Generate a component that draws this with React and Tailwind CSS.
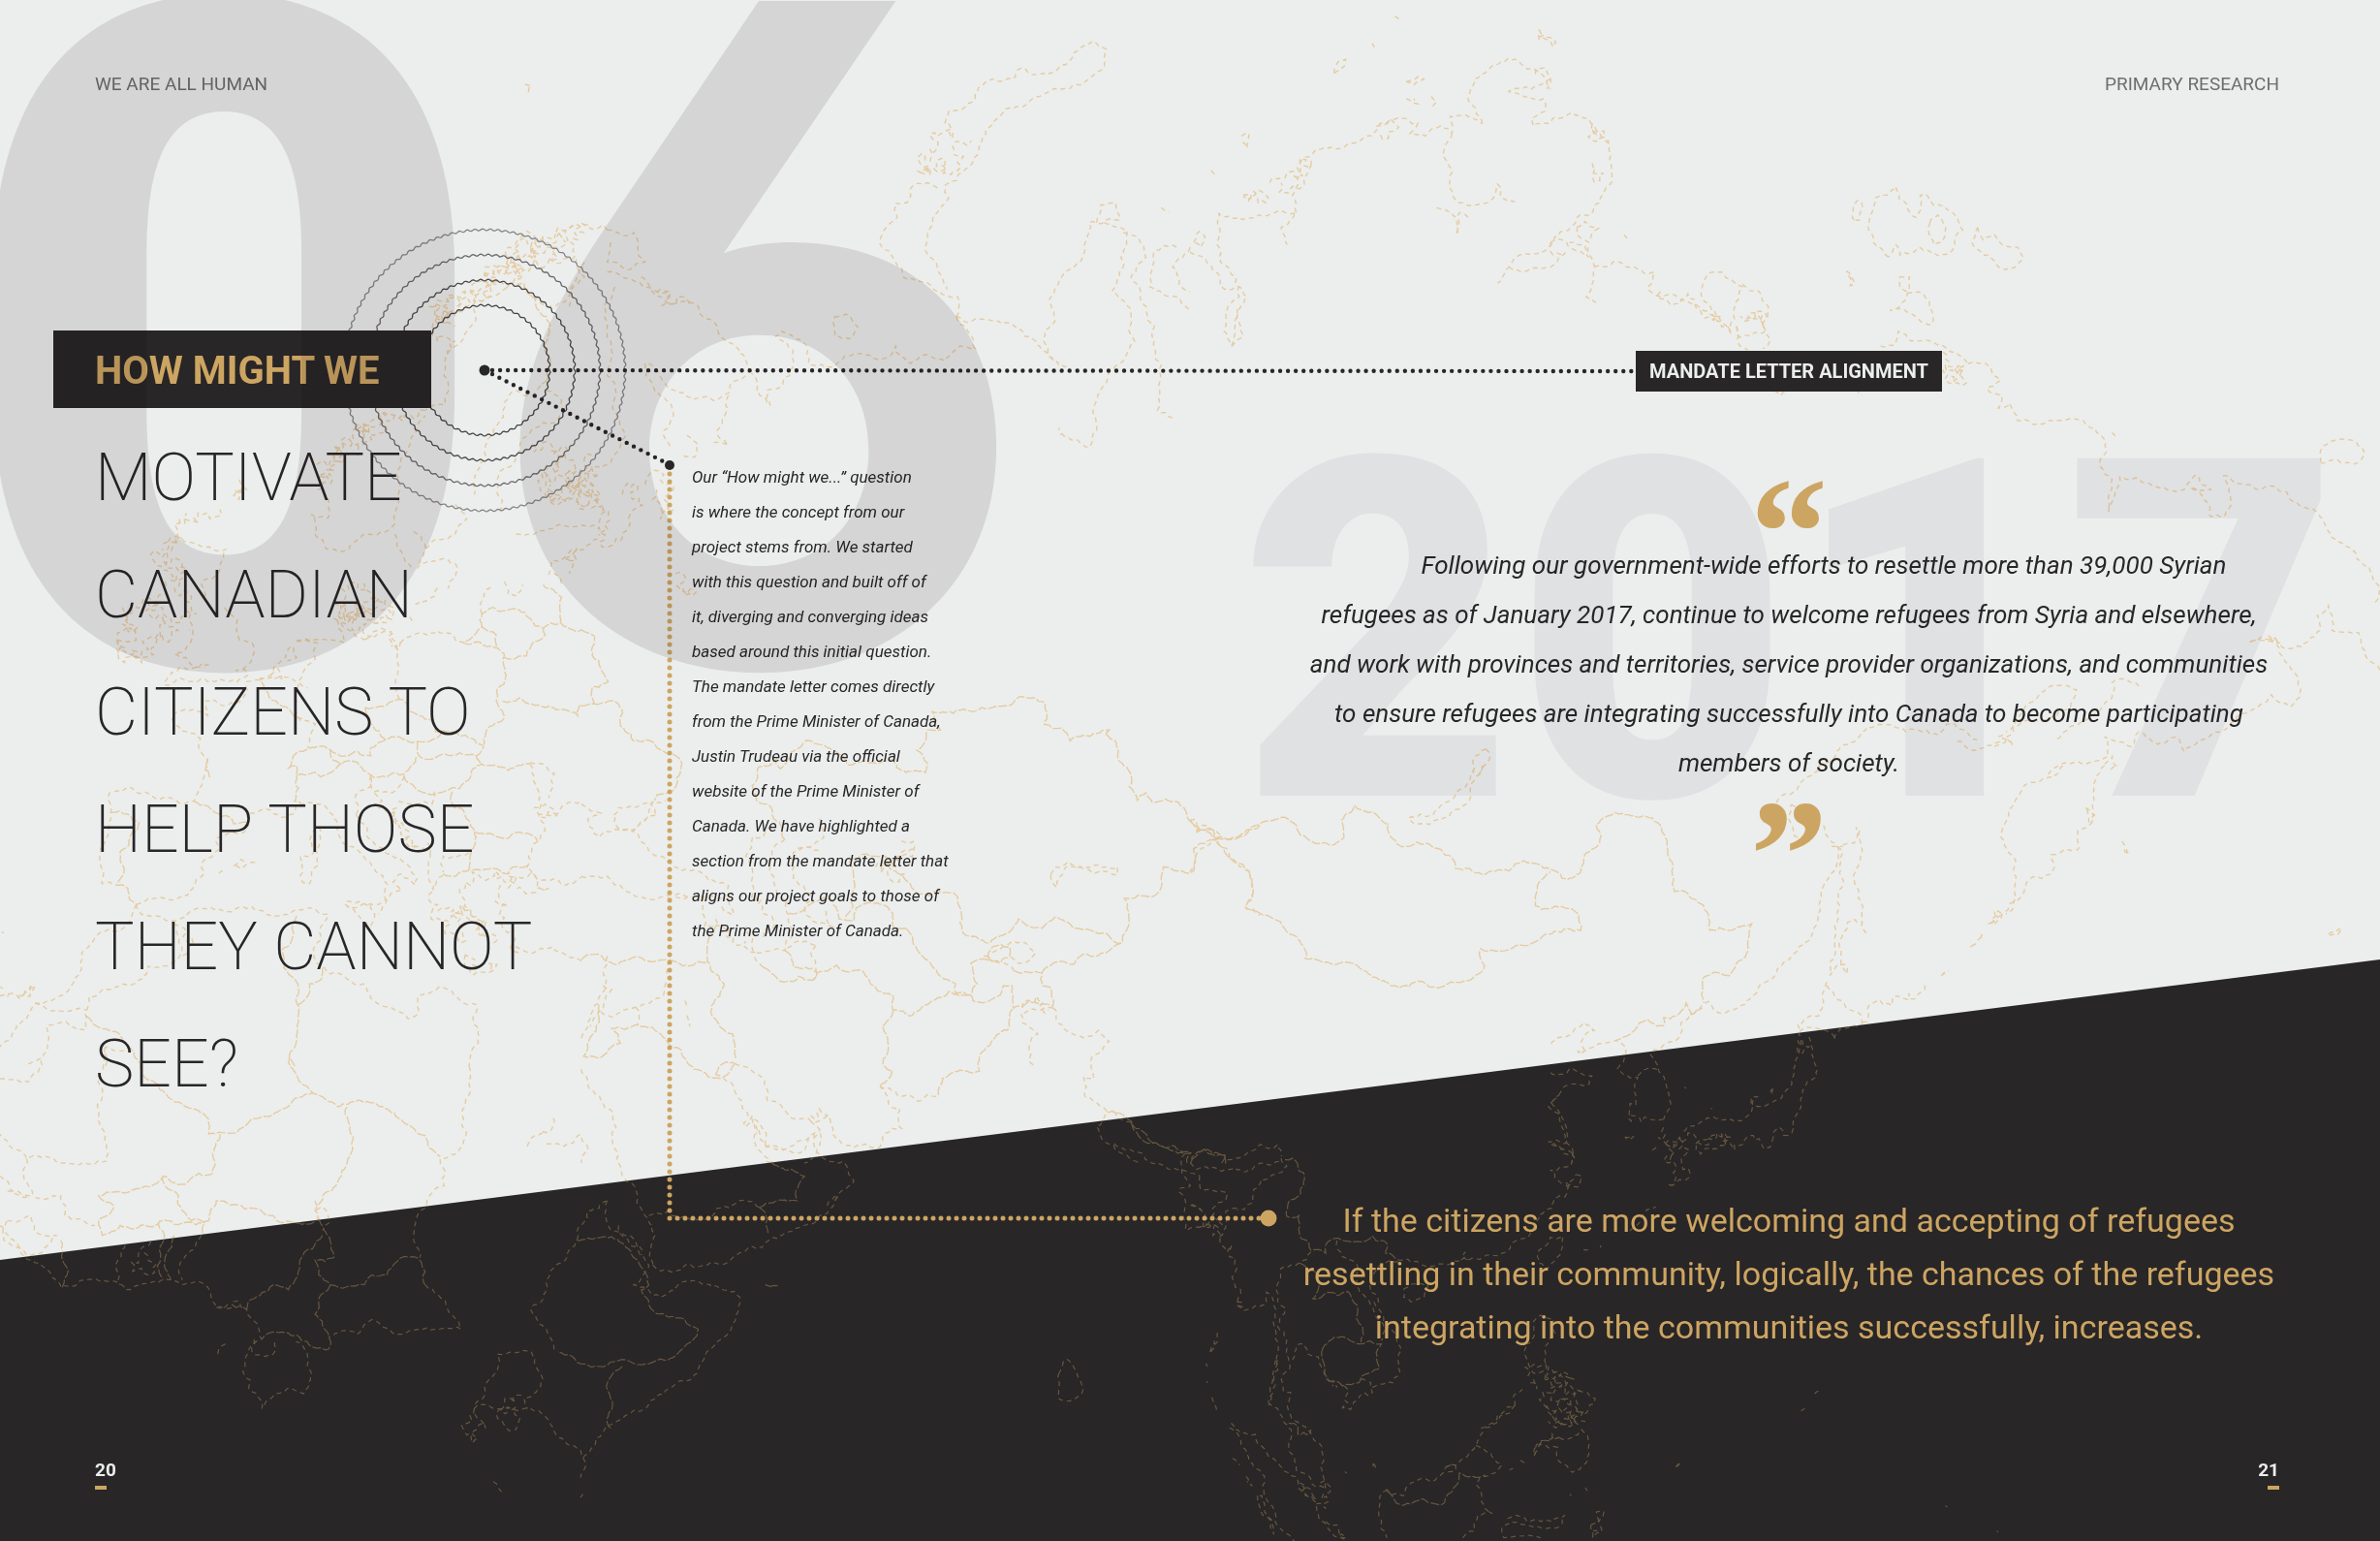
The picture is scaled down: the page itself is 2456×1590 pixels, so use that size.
import React from "react";

/* Map data: each sheet has an origin, a scale, and three kinds of line:
   c = coast (dashed), b = border (long dashes), r = ragged coast (fjords, islands). */
const SHEETS = [
  {
    o: [0, 0], s: [0.7832, 0.5102],
    c: [
      "1245,250 1250,225 1285,190 1310,160 1335,160 1345,138 1370,150 1405,130 1425,95 1442,83 1458,100 1455,135 1435,160 1400,180 1360,200 1325,220 1300,260 1290,300 1270,345 1245,375 1250,400 1235,430 1222,480 1225,520 1240,560 1248,585",
      "1235,380 1220,370 1200,380 1195,410 1180,410 1182,440 1165,465 1162,500 1180,530 1190,560 1215,570 1235,590 1262,600 1260,640",
      "1260,640 1280,650 1320,655 1350,680 1375,710 1395,735",
      "1260,640 1275,670 1285,705 1265,700 1245,730 1225,720 1200,735 1180,700 1165,725 1130,715 1100,740 1065,735 1060,695 1030,670 1022,680 1045,710 1040,760 1010,790 1015,820 990,755",
      "800,465 835,470 850,530 830,545 800,530 805,490",
      "845,560 870,600 910,612 945,665 975,715 985,755 960,795 940,810 890,790 860,740 850,735",
      "1100,640 1115,635 1130,660 1120,685 1100,680 1098,655 1100,640",
      "850,735 860,780 885,820 875,870 885,910",
      "960,800 955,840 945,870 960,900 940,895",
      "905,880 920,900 915,925 900,920",
      "692,170 700,172 696,185 692,180",
      "770,530 760,560 745,610 730,620 700,600 690,570 670,575 650,600 625,610 600,700 585,760 585,820 560,830",
      "750,620 770,560 760,520",
      "800,550 820,560 850,580 880,590 870,620",
      "810,580 795,620 805,700 800,760 808,830 825,880 800,940 770,960",
      "712,780 700,800 680,790 655,860 640,900 630,950 625,1000",
      "720,790 740,810 735,850 700,870 685,910 662,950 660,1035",
      "680,1080 720,1070 790,1070 800,1030",
      "745,1130 770,1110 790,1080",
      "415,1080 430,1110 460,1110 480,1080 520,1060 525,1000 522,960 540,900 560,840",
      "520,1080 530,1120 545,1150",
      "600,1020 615,1050 600,1080 575,1090 560,1110",
      "545,1075 560,1100 550,1150 600,1140 590,1190",
      "240,1090 298,1110 290,1150 265,1180 280,1230",
      "1445,450 1450,415 1470,410 1475,445 1455,450 1435,450 1430,490 1415,540 1395,570 1385,600 1390,650 1375,690 1395,740 1410,740",
      "1455,450 1485,465 1480,540 1465,590 1490,630 1495,690 1470,740 1450,790 1440,830 1445,870 1435,905 1420,890 1395,865 1398,880",
      "1480,470 1500,480 1510,520 1490,560 1510,620 1520,700 1530,740 1528,790 1525,830 1545,845",
      "1550,500 1520,510 1515,580 1550,600 1568,630",
      "1530,420 1540,430", "1568,500 1545,540 1555,580 1568,590",
    ],
    b: ["690,580 705,605 720,640 720,690 725,740 712,780"],
    r: [
      "1250,250 1255,280 1240,270 1235,300 1215,310 1225,335 1208,345 1225,355 1240,320 1243,350 1262,345 1255,295 1280,285",
      "775,455 740,465 715,480 700,505 670,500 668,530 640,540 630,570 610,590 590,610 565,620 590,640 570,660 600,690 590,720",
      "800,465 775,460 745,475 730,500 700,520 680,530 650,545 640,580 615,600 575,615 600,635",
      "770,470 720,500 680,510 690,540 650,570 620,590",
      "735,460 745,490 720,480 705,520 680,490 670,520 690,560 660,570 645,550 640,600 615,620 600,600 585,650 600,660",
      "865,590 900,600 910,620",
      "700,900 745,920 735,960 760,950 780,1000 770,1030 730,1000 720,960 735,920 755,930 745,980 790,960 780,920",
      "720,940 740,990 770,970 760,1010 790,1000 775,960 745,1010 725,980",
      "850,980 870,970 880,1000 870,1050 860,1010 865,990",
      "820,1000 830,1060 810,1100 790,1080 795,1020 770,1000",
      "740,1180 760,1110 745,1130 750,1160", "890,1160 905,1200 910,1190",
      "560,830 520,840 490,850 480,880 440,900 415,950 420,990 410,1040 415,1080",
      "530,840 500,860 470,870 440,920 420,960 435,980",
      "500,850 510,870 480,860 470,900 450,890 440,930",
      "215,1100 230,1060 290,1030", "315,970 325,990 315,1010 320,980",
      "240,1090 220,1120 245,1150 230,1190 245,1230 225,1250",
      "235,1080 225,1140 240,1170 215,1110",
      "170,1240 180,1270 155,1290 165,1310 155,1320 200,1310 215,1260 210,1220 190,1210 170,1240",
      "450,1190 480,1180 500,1210 480,1250 450,1230 460,1200", "440,1250 490,1260 510,1230 470,1230",
    ],
  },
  {
    o: [1228, 0], s: [0.7832, 0.5102],
    c: [
      "0,510 25,535 40,580 65,580 75,600 65,625 70,680 55,700 45,670 50,620 65,600 60,560 40,530 35,490 38,432 90,435 135,432 140,430 120,460 128,495",
      "55,700 58,650 62,625",
      "140,430 135,395 145,350 150,320 175,300 210,290 240,275 250,250 285,240 300,250 290,270 310,275 330,255 345,270 343,235 370,238 385,250",
      "345,270 333,315 345,350 348,400 365,415 400,400 405,372 410,400 428,408",
      "325,420 345,430 352,475 355,430 370,440",
      "385,250 370,210 370,180 385,150 410,125 428,120 445,140 470,165 475,180",
      "475,160 450,180 420,185 440,195 465,200 468,225 450,240 452,255 470,250 480,238 525,240 540,270 552,290 555,340 548,380 540,410 510,440 480,480 460,510 435,515 420,540 405,572",
      "420,540 440,550 480,535 495,510",
      "475,490 490,485 500,500 525,520 520,495 500,490", "475,490 478,515 490,515",
      "510,460 520,448 538,462 525,490 510,475 510,460",
      "525,500 533,540 522,600 535,612",
      "533,540 560,528 585,540 612,550 603,580 620,600 665,615 690,640 712,672 718,620 728,580 700,550 688,550 675,580 678,610 690,640",
      "728,575 750,590 762,620 755,660", "755,660 765,690 755,705", "720,660 725,700 735,708",
      "285,165 300,155 308,160 295,172 285,165", "190,148 190,140 195,125 205,120 203,135 190,148",
      "285,200 300,210 295,200", "318,195 325,205 318,218", "68,275 78,270 75,300 68,285",
      "5,490 12,468 20,480 15,500 5,490", "270,33 275,38", "240,88 243,95", "28,345 32,352", "572,475 576,482",
      "875,445 880,405 885,410 882,445 875,445",
      "920,520 900,490 893,455 903,400 930,377 945,420 957,440 962,395 970,393 980,415 1005,430 1018,465 1005,505 985,517 960,500 935,515 930,495 920,520",
      "975,450 985,435 992,450 990,490 980,495 973,470 975,450",
      "1038,460 1045,485 1060,475 1070,495 1090,500 1098,520 1085,542 1065,540 1045,515 1030,490 1038,460",
      "865,548 875,575 870,578 865,548", "935,560 948,560 945,590 935,580 935,560",
      "945,593 965,593 978,630 978,655 960,645 940,625 922,628 935,620 945,593",
      "910,700 930,695 933,670 950,690 980,693 1000,710 1025,735",
      "1025,735 1055,742 1068,770 1050,785 1070,800 1065,825 1080,815 1090,850 1110,858 1150,850 1180,858 1200,880 1208,910 1200,945 1215,970 1210,1035 1220,990 1225,965 1250,968 1275,985 1310,990 1325,960 1345,990 1318,985 1335,1005 1345,1045 1362,1045 1362,962 1390,980 1410,990 1445,995 1455,1015 1480,1030 1495,1060 1520,1100 1545,1140 1558,1160 1568,1190 1560,1220",
      "1490,935 1490,910 1510,890 1530,890 1548,920 1535,938 1510,930 1490,937", "1215,875 1220,885",
      "880,795 883,780", "770,790 778,800 785,790",
      "1568,1355 1550,1330 1540,1280 1505,1275 1500,1225 1485,1245 1490,1270 1470,1300 1440,1310 1420,1285 1435,1300 1395,1300 1430,1290 1440,1330 1455,1360 1462,1410 1450,1430 1425,1405 1395,1440 1350,1480 1310,1520 1300,1490 1275,1505 1250,1480 1240,1510 1205,1490 1210,1530 1170,1540 1130,1568",
      "1065,1490 1085,1480 1100,1430 1125,1398 1168,1395 1160,1430 1120,1460 1075,1480",
      "1250,1388 1235,1375 1215,1380 1215,1410 1195,1440 1140,1500", "1205,1545 1215,1530 1222,1550 1210,1560",
      "390,1515 383,1520 370,1568", "390,1515 395,1530 380,1568",
    ],
    b: [],
    r: [
      "105,370 125,360 145,320 160,325 150,360 130,390 120,370", "530,250 545,265 540,280 530,260 552,290",
      "530,330 545,350 540,365 533,340", "460,60 470,75 482,85 478,95 460,80 460,60", "455,150 475,170 470,180",
      "245,255 260,250 270,265 250,270", "70,395 85,395 100,410 90,410 70,398", "620,590 630,610 665,605",
      "720,660 760,640 730,650 755,655 725,640", "665,615 700,650 712,672", "992,712 1020,740 1000,775 995,740 1015,745 1000,760",
    ],
  },
  {
    o: [0, 790], s: [0.7832, 0.5102],
    c: [
      "0,633 37,640 56,591", "138,570 140,800 60,790 35,795 0,745",
      "618,608 602,785 580,795 585,850 560,895 545,950 553,995",
      "35,795 45,870 80,870 85,910 125,930", "0,830 40,870 10,860",
      "10,920 40,910 45,940 75,950 55,985 35,990 5,960 10,920",
      "0,930 40,1000 80,1055 155,1045 165,1060 215,1040 265,1045 285,1095 325,1100 340,1130 345,1160 330,1175 320,1225 345,1300 360,1275 385,1260 400,1270 405,1190 390,1165",
      "335,1160 332,1185 360,1190 362,1165",
      "165,970 152,1010 158,1050", "265,950 245,990 240,1040",
      "560,1050 590,1100 607,1140 575,1140 550,1140 520,1150 490,1120 470,1150 433,1155", "287,1190 300,1165",
      "815,804 820,830 840,870 850,910 860,930 860,1010",
      "800,880 775,900 760,960 745,1000 720,1040 715,1080 700,1095 730,1180 735,1185",
      "800,880 805,940 855,1010 835,1050 850,1055 870,1075 970,1065 975,1075 950,1160 920,1220 880,1260 820,1320 785,1360 768,1400 740,1360 695,1300 625,1300 640,1250 655,1225 655,1190 700,1185 715,1240 690,1280 695,1300",
      "768,1400 772,1415 765,1440", "650,1448 662,1470", "765,1480 768,1473",
      "860,1010 870,1022 905,1008 975,985 1030,950 1080,910 1090,905 1105,870 1125,840 1110,800 1080,790 1075,740 1060,780 1010,770 995,730",
      "885,910 925,920 945,895 1000,893", "1008,1050 1025,1052 1012,1058",
      "1395,1230 1405,1200 1420,1235 1425,1270 1410,1285 1395,1280 1395,1230",
      "715,740 725,740 728,710", "695,770 720,740", "720,765 740,770 765,745", "0,465 25,470 45,440",
    ],
    b: [
      "185,604 245,690 275,715 275,745 312,743 345,710 412,662 445,690 472,676 580,790", "381,590 390,625 412,662",
      "457,690 465,750 450,830 415,900 420,920",
      "290,745 280,825 215,830 130,870 150,890 130,920 135,950 185,930 220,920 240,925 275,920 285,880 360,910 420,915",
      "80,960 90,1020 82,1055", "210,920 210,980 215,1040", "230,950 225,1040", "215,830 235,870 240,900 270,925 265,950",
      "420,915 435,960 440,995 415,1000 435,1050 420,1080 415,1110 433,1180 405,1165 345,1160",
      "425,950 395,1000 380,1060 360,1050 330,1080 325,1105",
      "435,1050 480,1050 490,1030 510,1030 545,993 553,1000 560,1050",
      "760,960 790,955 840,1000 850,1025 855,1050 845,1060 855,1090 880,1115 920,1140 870,1200 830,1205 790,1215 770,1210 735,1185",
      "820,1215 803,1240 800,1320 805,1340", "1000,893 1050,880 1060,830 1010,800", "1000,893 1012,945",
    ],
    r: [
      "625,1300 615,1330 622,1370 640,1340 625,1310", "660,1300 665,1335 685,1320 665,1280 690,1275", "190,985 205,1010 195,1030 200,960",
      "415,880 430,900 425,940", "285,1095 300,1090 325,1100", "815,930 830,970 845,990", "1090,890 1105,870 1100,880", "25,465 40,445", "855,910 880,900 885,910",
    ],
  },
  {
    o: [1228, 790], s: [0.7832, 0.5102],
    c: [
      "0,215 10,175 35,150",
      "385,0 370,60 330,110 300,118 288,105 320,100 345,70 370,20 375,0",
      "1205,0 1195,20 1190,60 1190,110 1170,130 1170,170 1135,180 1133,220 1110,225 1095,265 1070,300 1055,320 1060,295",
      "1180,85 1192,100 1185,120 1180,85", "1228,153 1237,180 1230,165", "1500,340 1518,330 1512,342 1500,343",
      "1150,0 1105,35 1078,90 1073,160 1075,300", "1030,365 1045,340", "990,425 1000,415",
      "805,1305 810,1300", "823,1270 829,1265", "995,1497 998,1499", "1063,1548 1065,1550", "640,1418 645,1410",
    ],
    b: [
      "0,110 10,130 30,145 50,150 90,120 115,108 140,120 145,140 190,160 203,145 200,110 217,80 235,95 262,118 265,145 285,163 315,158 345,185 350,208 385,220 420,213 440,192 475,210 490,228 515,215 520,180 540,150 535,120 550,102 570,97 600,102 625,140 632,190 638,255 665,270 683,300 685,333 710,333 740,320 735,355 710,425 690,418 675,432 677,480",
      "35,155 70,200 82,240 75,290 110,310 140,345 152,390 185,400 230,415 275,450 300,435 350,437 375,425 388,405 383,370 410,375 450,360 480,335 515,333 512,300 490,285 455,283 455,265 475,215",
    ],
    r: ["0,110 25,130 35,150"],
  },
  {
    o: [0, 600], s: [0.38265, 0.33333],
    c: [
      "445,320 480,300 540,303 640,310 668,290 660,272 635,275", "445,310 490,265 545,255",
      "520,150 505,200 470,225 500,235 530,265 570,260", "605,80 640,120 645,180 680,190 685,220 655,270",
      "700,305 665,310 665,345 640,375 610,385 570,365 555,370 560,415 530,400 490,400 465,415 475,445 510,470 540,485 535,510 560,550 555,575 545,630 525,680 460,670 390,652 345,635 325,650 295,655 298,700 295,760 270,820 270,870 280,900 275,935 315,940",
      "368,1000 330,1075 260,1100 220,1150 215,1215 170,1280 95,1305 75,1345 45,1370 30,1410 0,1440",
      "368,1000 400,980 480,980 520,950 550,905 545,870 590,830 580,800 650,780 670,755 670,715 720,705 760,730 790,720 800,690 850,685 880,700 905,760 940,820 1010,890 1045,940 1040,985 1015,1000 955,1010 930,1000 935,990 1000,1000 1010,1040 1000,1065 960,1030 935,1005",
      "1080,955 1040,995 1020,1030", "960,720 990,790 1040,840 1090,870 1125,920 1120,940 1080,905 1060,930 1080,955",
      "960,720 960,660 1005,630 1000,600", "1160,840 1155,900 1170,960",
      "835,800 850,760 865,770 860,820 845,840 810,850 815,930 835,935 858,880 855,840 835,800",
      "630,880 650,860 665,875 650,890 630,880", "590,903 600,895", "675,870 690,870",
      "368,1000 380,1030 470,1050 500,1040 570,1010 680,1007 710,1020 800,1015 850,1015 865,1030 885,1030 860,1080 865,1110 845,1140 870,1190 890,1215 980,1245 1000,1290 1075,1330 1100,1353 1125,1340 1130,1280 1185,1255 1220,1270 1240,1295 1285,1310 1275,1350 1265,1500",
      "470,1055 480,1100 485,1160 465,1180 400,1190 395,1215 350,1250 280,1260 240,1285 228,1390 125,1378 115,1475 75,1495",
      "95,1305 232,1327", "285,1500 285,1440 340,1450", "20,1285 25,1275", "65,1280 95,1250 80,1280", "0,1255 8,1260", "5,1085 10,1088",
      "700,305 730,290 755,250 790,200 800,235 775,245", "700,300 760,290 800,310 830,330",
      "800,185 855,190 850,240 820,275 805,320 800,370 810,430 850,440 835,490 830,515",
      "800,183 850,180 930,190 910,120", "985,180 1055,155 1070,200 1075,260 1085,370", "985,180 940,150 910,100",
      "1080,190 1150,165 1210,160 1230,185 1255,190", "1300,100 1300,60 1325,10", "1360,0 1370,40 1395,45 1410,10",
      "1000,600 1010,650 1050,655 1090,600", "1430,565 1440,620 1455,660 1450,715 1470,770 1450,805",
      "1430,560 1465,565 1495,595 1490,640 1480,670", "1450,805 1425,850 1420,890 1460,925 1520,940 1568,915",
      "1450,720 1500,725 1525,690 1568,680", "1265,840 1195,850 1195,900", "1195,910 1165,950", "1170,650 1165,690 1075,680",
      "1390,1130 1430,1150 1490,1130 1530,1160 1568,1175", "1120,70 1150,60 1180,20", "1105,110 1110,130",
    ],
    b: [
      "300,715 345,720 375,745 350,790 345,820 330,830 335,890 315,940 345,950 350,985 368,1000",
      "560,550 570,610", "525,682 580,715 620,730 630,750 670,745",
      "800,1035 790,1060 785,1115 760,1140 765,1180 795,1230 800,1305 805,1360 800,1420 780,1470 795,1500",
      "870,1195 870,1225 835,1245 825,1290 800,1308", "232,1345 380,1495", "705,310 715,335 745,370 780,395 815,425",
      "1250,190 1335,205 1360,225 1365,290 1340,335 1355,400 1355,430 1310,470 1305,505",
      "1255,185 1280,165 1300,140 1338,165 1338,205",
      "1300,140 1300,100 1330,80 1380,85 1415,95 1430,115 1465,145 1510,130 1515,50 1465,10",
      "1465,145 1470,165 1440,185 1420,230 1380,240 1360,235", "1510,125 1568,150",
      "985,390 1060,370 1085,365 1130,415 1165,430 1175,465 1215,465 1270,485 1305,510",
      "985,390 1000,440 1040,490 1075,480 1125,495 1165,490 1190,465",
      "1355,370 1400,360 1470,390 1550,405 1558,415 1568,380",
      "1125,495 1130,540 1165,550 1240,530 1285,540 1305,510",
      "1040,490 1000,515 1000,540 930,540 890,520 835,515 800,530 775,580",
      "890,520 895,550 920,565 965,560 980,585 1040,605 1090,595 1110,570 1125,540",
      "775,580 800,570 800,600 850,590 865,605 895,590 920,565", "800,600 805,640 795,680 820,690",
      "1090,600 1120,640 1150,655 1210,645 1240,640 1275,580 1300,565 1370,585 1430,565", "1285,540 1300,565",
      "1220,650 1225,700 1265,740 1280,775 1360,795 1410,780 1450,805",
      "1280,775 1270,840 1265,890 1310,890 1370,905 1380,885 1420,880", "1195,905 1265,895",
    ],
    r: [
      "330,80 345,130 365,155 310,180 320,220 365,215", "445,0 420,60 450,110 440,180 400,210 350,225",
      "500,60 530,100 510,150", "730,290 750,270 760,300 740,300", "900,70 960,80 1000,120 1040,110 1020,60 970,100 910,110",
      "930,80 950,130 1000,170 1040,150", "1060,160 1080,190 1055,200", "1010,655 1040,710 1080,780 1130,820",
      "1070,700 1070,750 1100,790 1130,820 1160,840", "1165,960 1180,1000 1190,1050 1215,1060 1200,1090 1240,1120 1245,1070 1220,1030 1260,1040 1300,1090 1310,1100 1270,1020 1250,980 1255,930 1300,920 1360,930 1370,900",
      "1350,940 1370,1000 1360,1040 1385,1080 1380,1120 1400,1150", "1370,950 1450,930 1480,950 1430,965 1390,955",
      "1255,1155 1340,1185 1280,1170 1255,1155", "1180,1020 1240,1000 1280,1040 1320,1090 1330,1120",
      "1440,700 1470,690 1500,720 1460,730", "470,1060 490,1160",
    ],
  },
  {
    o: [600, 600], s: [0.4464, 0.38265],
    c: [
      "0,600 30,620 45,625 15,640 40,690 120,675 140,650 175,630 160,600 195,590",
      "75,630 85,610 165,595 150,640 130,660 85,665 75,630",
      "130,680 180,740 250,780 310,810 340,820 345,860 240,855 190,850", "0,795 60,795 100,830 150,855 250,850",
      "280,850 285,930 310,930", "340,860 350,900 320,870",
      "470,695 440,730 435,780 450,830 480,900 490,950 470,995 400,1000 380,930", "395,690 380,740 395,800 390,860", "440,660 420,690 395,690",
      "550,640 560,690 490,730 490,800 530,850 520,900 580,930 560,880", "500,720 550,725",
      "1085,790 1095,770 1125,755 1170,770 1240,770 1240,790 1180,785 1120,770 1100,825 1085,790",
      "1000,1050 930,1025", "950,1000 1000,970 1050,1000 1010,1030 990,1010",
      "690,1360 730,1385 825,1385", "1470,700 1500,750 1545,780 1550,830 1535,880 1568,900",
      "1090,1150 1120,1210 1160,1230 1195,1210 1220,1240 1180,1280 1185,1340 1160,1335 1165,1390 1215,1430 1190,1470 1230,1520 1290,1568",
      "1090,1150 1015,1165 1020,1190 1055,1220 1035,1250 1035,1295 1050,1310",
      "310,1330 345,1350 370,1400 395,1450 400,1510 445,1568",
      "355,1300 385,1310 420,1340 430,1400 480,1440 530,1455 570,1440 580,1490 690,1525 700,1490 740,1475 735,1420 710,1410 690,1360",
      "530,1455 555,1480 545,1530 515,1568", "425,1525 480,1525 550,1480", "400,1450 425,1480 425,1520",
      "60,1010 55,1090 20,1180 0,1240", "50,1090 70,1100 40,1160 20,1200", "45,1160 70,1175 125,1148 190,1115 200,1030",
      "125,1148 130,1195", "240,1130 245,1150", "245,1170 250,1200", "0,1315 20,1370 80,1470 85,1568", "0,1500 15,1530 0,1568",
      "535,1075 530,1000 545,980 500,970 470,995",
    ],
    b: [
      "0,130 28,145 25,200 45,235 62,270 40,285 25,285 30,330", "0,335 30,330",
      "30,330 80,325 95,355 90,390 115,410 120,430 170,440 200,465 232,490 220,530 215,560 175,575 170,590",
      "310,930 295,960 290,1000 300,1050 330,1085 300,1145 320,1200 350,1220 355,1290",
      "420,1040 470,1080 535,1075 545,1055 590,1035 650,1050 680,1095 720,1115 720,1155 765,1170 815,1130 850,1105 900,1115",
      "480,895 530,870 580,860 595,910 630,915 635,880 690,870 720,895 720,930 750,935",
      "470,695 445,640 430,600 405,590 395,550 410,500 450,480 460,505 485,460 520,428 560,440 590,460 615,495 650,485 680,490 715,480 750,515 795,515 800,490 775,455 790,440 800,400 830,400 810,350 910,350 925,340 995,332 1020,310 1070,325 1070,385 1110,395 1130,430 1160,415 1220,400 1210,410 1240,450 1265,510 1285,590 1305,570 1320,595 1380,595 1400,630 1430,670 1455,665 1465,695 1415,720 1415,780 1345,770 1320,850 1255,855 1265,890 1260,940 1248,975 1215,950 1140,935 1095,905 1065,935 1010,910 940,975 890,955 875,920 870,850 780,845 740,790 700,740 620,755 610,910",
      "1465,695 1510,690 1568,658",
      "750,935 780,1000 820,1045 865,1085 865,1110 900,1115 915,1085 905,1050 900,1030 940,1020 950,985 990,985 990,1010 970,1025 930,1010",
      "900,1115 905,1130 960,1120 975,1090 995,1090 1000,1150 1050,1135 1090,1145 1085,1095 1065,1090 1065,1055 1000,1050",
      "1065,1055 1090,1030 1140,1030 1170,1005 1248,975",
      "720,1155 695,1200 697,1300 720,1320 690,1360", "825,1385 835,1340 920,1320 920,1280 945,1250 985,1210 990,1165 1000,1150",
      "1215,1430 1260,1445 1300,1485 1350,1525 1410,1540 1400,1568", "1410,1560 1440,1530 1490,1545 1480,1568",
      "0,1020 30,1005 60,1025 160,1025 200,1020 295,1025",
      "40,1140 20,1230 5,1280 40,1285 90,1245 70,1205 130,1195 190,1230 260,1315 330,1335 355,1300", "310,1330 330,1298 355,1300",
      "470,995 490,1040 545,1055",
    ],
    r: [
      "740,700 770,715 740,740 700,760 710,800 735,810 750,780", "680,770 700,745 740,730 770,720", "220,10 240,40 255,20",
      "310,910 345,940 380,970 400,1000 420,1040", "400,860 430,900 440,940 410,960", "530,1440 570,1440", "395,1440 405,1490",
      "1020,1150 1080,1155",
    ],
  },
  {
    o: [1150, 1130], s: [0.38265, 0.33333],
    c: [
      "0,150 30,170 75,180 100,210 150,230 200,240 230,250", "205,210 220,230 290,235 355,237 385,215 450,200",
      "305,200 325,195 395,152 415,165 440,152 450,190", "450,195 465,220 395,260 375,330 350,355 330,355",
      "190,180 182,240 205,280 175,290 175,300 190,350 195,420 240,410 250,390 205,335",
      "230,250 232,290 280,300 305,305 300,325 265,350 265,380", "205,340 245,370 240,410 270,400",
      "765,510 830,525 850,530 900,525 935,510", "955,510 1035,497 1070,460 1115,440 1145,370 1180,350 1185,320 1215,315 1225,270 1245,245",
      "1235,180 1170,145 1215,150 1205,60 1170,35 1200,0",
      "340,600 330,650 350,667 410,645 410,610 430,650 432,750 440,800 430,850 420,900 415,960",
      "330,350 300,360 300,410 280,450",
      "530,485 500,520 450,535 435,600 462,660 440,715 465,760 470,820 450,880 455,915 475,920 475,990 520,1030 555,1080 555,1150 570,1220 540,1210 490,1160 470,1090 465,1020 440,970 415,950",
      "440,820 430,880 415,950",
      "480,820 490,775 510,770 520,800 550,810 565,850 590,900",
      "600,450 615,500 660,540 650,590 700,670 720,700 720,760", "700,640 725,700 755,735 775,790 770,860 750,890 690,910",
      "765,515 730,520 690,560 690,610 720,650", "780,600 800,585 845,585 835,625 800,640 780,625 780,600",
      "1210,440 1195,500 1165,540 1145,520 1145,480 1175,440 1210,440",
      "278,735 258,800 270,760", "247,830 250,840", "249,885 251,890", "263,935 275,980",
      "315,1015 340,1045 380,1050 405,1095 460,1165 490,1180 520,1240 545,1270 575,1340 620,1375",
      "310,1030 345,1090 375,1150 405,1180 410,1250 435,1300 455,1350 485,1380",
      "318,1125 338,1145", "355,1180 372,1210 358,1195", "385,1240 400,1300 430,1360 405,1290 398,1240 385,1240",
      "735,1220 745,1240 780,1240 800,1200 850,1195 895,1150 920,1145 975,1085 990,1030 1050,980 1080,960 1075,940 1100,910",
      "735,1220 715,1245 713,1300 735,1370", "1080,960 1000,1030",
      "975,1085 1000,1100 1045,1145 1000,1180 975,1200 990,1235 1000,1280 1020,1295 980,1300 970,1350 935,1375",
      "1060,1310 1080,1300 1150,1320 1180,1320 1215,1300 1190,1340 1140,1335 1070,1320 1045,1340 1050,1370 1150,1370",
      "1110,770 1125,760 1130,700 1150,680 1185,695 1190,740 1160,780 1160,820 1170,850 1130,860 1110,810 1110,770",
      "1200,1060 1260,1035 1280,1080 1270,1140 1235,1168 1200,1135 1195,1090 1150,1080 1130,1120 1145,1075 1200,1060",
      "1095,1130 1115,1138", "1065,1160 1075,1155", "1515,1150 1525,1140", "1270,1215 1275,1225", "1228,1235 1232,1240", "622,1165 626,1170",
      "698,1140 705,1155 698,1150 698,1140", "1390,420 1420,380 1460,345", "1265,478 1280,478", "1310,465 1312,472", "0,50 45,85",
    ],
    b: [
      "45,85 60,115 130,160 190,175 205,180", "205,210 220,180 250,168 265,180 297,188 300,215",
      "460,200 480,195 498,235 510,240 510,280 500,310 470,330 465,375 500,370 500,405 505,445 525,460 530,480 570,490 575,455 605,443 640,455 680,450 695,435 705,450 735,460 732,490 765,510",
      "500,520 540,545 550,600 535,630 575,610 600,620 630,608 655,650 652,690 670,720 665,765",
      "560,790 580,760 630,755 665,770 720,770 715,845 665,870 660,890 615,900 580,885 565,830 560,790",
      "470,1015 495,1025 495,1050 525,1050 530,1035",
      "735,1225 760,1262 800,1265 825,1250 850,1262 890,1262 915,1215 930,1170 1000,1175",
    ],
    r: [
      "270,400 285,460 310,500 325,550 340,600", "225,410 265,370 290,400 250,400", "1245,245 1175,232 1230,220 1235,180", "935,510 945,485 955,510",
      "620,900 625,930 615,968 645,950 685,930 690,905 660,890", "500,1200 530,1220 545,1250 515,1240 500,1200", "555,1200 580,1230 570,1280 540,1270",
      "570,1320 600,1330 625,1370 600,1370", "1285,1330 1300,1290 1320,1290 1315,1350 1290,1370 1285,1330", "895,1150 920,1145 910,1165 890,1160",
      "1115,870 1165,850 1200,870 1240,880 1200,900 1215,930 1265,920 1265,990 1240,960 1200,940 1190,980 1160,960 1155,920 1190,900 1180,870",
      "1165,960 1190,1010 1215,1000 1245,1010 1230,980 1190,1030 1170,1010", "1180,850 1220,900 1250,960 1270,1010", "1130,880 1140,910 1120,890",
      "1160,870 1210,890 1180,930 1230,940 1200,970 1240,990 1210,1020 1180,990",
      "1200,1060 1170,1070 1130,1110", "330,640 345,655 325,655", "435,820 430,840", "580,885 600,905",
    ],
  },
  {
    o: [1600, 740], s: [0.33333, 0.33333],
    c: [
      "700,265 760,230 810,180 830,150 870,130 910,85 950,65 980,30 1020,22 1060,25 1100,45 1130,38 1200,55 1225,22 1280,40 1320,70",
      "1260,75 1290,95 1330,97 1370,85 1400,65 1425,75 1430,90",
      "845,335 880,390 885,470 850,510 840,560 835,600 815,660 770,710 740,750 690,805 620,870 580,900 530,917 505,905 490,880 460,905 430,925 405,945 400,990 360,1010 320,1030 310,1045 335,1080 355,1125 367,1165 362,1220 350,1245",
      "265,1200 262,1150 270,1115 225,1105 207,1088 235,1045 235,1025 205,1000 150,1010 95,1045 85,1035 105,1030 95,1005 135,970 105,945 75,965 30,990 0,1015",
      "270,1110 295,1090 335,1095",
      "890,400 905,420 895,480 905,520 895,590 880,650 880,700 865,760 865,800 890,765 910,765 918,795 895,710 905,670 920,635 935,625 965,635 978,675",
      "905,395 940,390 950,370 945,340 958,350 960,430 945,470 953,560 965,635", "870,400 905,400",
      "855,820 845,850 845,880 830,925 790,935 765,950 770,975 800,960 835,965 880,1000 895,965 965,945 960,920 915,900 880,865 855,820",
      "1210,800 1232,785", "1300,712 1308,705", "1330,685 1337,668",
      "765,975 770,1030 755,1070 752,1110 730,1155 690,1190 640,1205 620,1190 625,1210 590,1250 560,1245 485,1240 450,1265 405,1285",
      "800,990 808,1040 825,1085 822,1115 780,1155 775,1210 755,1240 755,1270 735,1295",
      "450,1320 490,1305 540,1295 545,1320 480,1335 465,1352 450,1340 450,1320",
      "230,1300 258,1297 240,1308 230,1300", "415,1145 420,1148", "497,1210 500,1213",
      "0,1100 30,1105 65,1085 90,1100 128,1110 120,1135 80,1135 0,1190 30,1235 45,1305 70,1345",
      "745,270 790,270 810,330 790,372 750,360 740,300 745,270",
    ],
    b: ["470,900 435,920 420,885 390,925 350,930 350,955 310,945 300,935 260,970 205,1000"],
    r: [
      "350,1245 310,1245 250,1250 240,1240 265,1200", "780,1000 800,1020 780,1040 765,1000", "735,1295 720,1280 690,1300",
      "690,1300 615,1295 600,1310 570,1340 550,1310 530,1290 450,1300 400,1300 360,1325", "355,1320 400,1305 430,1340 410,1400 385,1445 362,1445 380,1410 365,1380 380,1350 355,1320",
      "350,1270 360,1325 370,1370", "685,1165 690,1145 680,1160", "315,1340 330,1330", "625,1200 640,1175 620,1190",
      "965,945 980,905 1030,890 1060,865 1110,855 1160,825", "1355,640 1385,600 1400,610 1370,635", "70,1345 65,1380 40,1350 0,1320", "540,1290 560,1300 530,1330",
      "1375,90 1410,65 1430,85",
    ],
  },
];

/* Midpoint displacement with a fixed seed, so the coast is uneven yet stable. */
function tracePaths(kind, amount, minLength) {
  let seed = 7;
  const rnd = () => {
    seed = (seed * 1103515245 + 12345) % 2147483648;
    return seed / 2147483648 - 0.5;
  };
  let d = "";
  const split = (a, b, out) => {
    const dx = b[0] - a[0];
    const dy = b[1] - a[1];
    if (Math.hypot(dx, dy) < minLength) {
      out.push(b);
      return;
    }
    const k = rnd() * amount;
    const m = [(a[0] + b[0]) / 2 - dy * k, (a[1] + b[1]) / 2 + dx * k];
    split(a, m, out);
    split(m, b, out);
  };
  SHEETS.forEach(({ o, s, [kind]: lines }) => {
    lines.forEach((line) => {
      const pts = line.split(" ").map((p) => {
        const [x, y] = p.split(",").map(Number);
        return [o[0] + x * s[0], o[1] + y * s[1]];
      });
      const out = [pts[0]];
      for (let i = 1; i < pts.length; i++) split(pts[i - 1], pts[i], out);
      d += "M" + out.map((p) => p[0].toFixed(1) + " " + p[1].toFixed(1)).join("L");
    });
  });
  return d;
}

const COAST = tracePaths("c", 0.35, 5);
const BORDER = tracePaths("b", 0.35, 5);
const RAGGED = tracePaths("r", 1.15, 7);

function wavyRing(cx, cy, r) {
  const waves = Math.round((2 * Math.PI * r) / 8);
  const steps = waves * 8;
  const pts = [];
  for (let i = 0; i < steps; i++) {
    const t = (i / steps) * 2 * Math.PI;
    const q = r + 0.9 * Math.sin(waves * t);
    pts.push((cx + q * Math.cos(t)).toFixed(1) + " " + (cy + q * Math.sin(t)).toFixed(1));
  }
  return "M" + pts.join("L") + "Z";
}

const RINGS = [
  { d: wavyRing(500, 382, 145), stroke: "#868485" },
  { d: wavyRing(500, 382, 119), stroke: "#6a6768" },
  { d: wavyRing(500, 382, 93), stroke: "#4b4849" },
  { d: wavyRing(500, 382, 67), stroke: "#454243" },
];

function MapLines() {
  return (
    <>
      <path d={COAST} strokeDasharray="5 4" />
      <path d={BORDER} strokeDasharray="9 2" />
      <path d={RAGGED} strokeDasharray="5 4" />
    </>
  );
}

function Backdrop() {
  return (
    <svg aria-hidden="true" viewBox="0 0 2456 1590" preserveAspectRatio="xMinYMin slice" className="absolute inset-0 h-full w-full" fill="none">
      <defs>
        <clipPath id="paper"><path d="M0 0H2456V990L0 1300Z" /></clipPath>
        <clipPath id="ink"><path d="M0 1300L2456 990V1590H0Z" /></clipPath>
      </defs>
      <path d="M0 1300L2456 990V1590H0Z" fill="#282627" />
      <g clipPath="url(#paper)" stroke="#e6cba2" strokeWidth="1.4"><MapLines /></g>
      <g clipPath="url(#ink)" stroke="#66563f" strokeWidth="1.2"><MapLines /></g>
      {RINGS.map((ring) => (
        <path key={ring.stroke} d={ring.d} stroke={ring.stroke} strokeWidth="1.3" />
      ))}
      <g strokeLinecap="round">
        <path d="M508 382L1688 383" stroke="#282627" strokeWidth="4.4" strokeDasharray="0 8.05" />
        <path d="M508 386L688 478" stroke="#282627" strokeWidth="4.4" strokeDasharray="0 8.2" />
        <path d="M691 489V1257" stroke="#cda562" strokeWidth="5" strokeDasharray="0 8" />
        <path d="M691 1257H1300" stroke="#cda562" strokeWidth="5" strokeDasharray="0 8" />
      </g>
      <circle cx="500" cy="382" r="5.5" fill="#282627" />
      <circle cx="691" cy="480" r="5" fill="#282627" />
      <circle cx="1309" cy="1257" r="8.5" fill="#cda562" />
    </svg>
  );
}

const QUESTION = ["MOTIVATE", "CANADIAN", "CITIZENS TO", "HELP THOSE", "THEY CANNOT", "SEE?"];

const NOTE = [
  "Our “How might we...” question",
  "is where the concept from our",
  "project stems from. We started",
  "with this question and built off of",
  "it, diverging and converging ideas",
  "based around this initial question.",
  "The mandate letter comes directly",
  "from the Prime Minister of Canada,",
  "Justin Trudeau via the official",
  "website of the Prime Minister of",
  "Canada. We have highlighted a",
  "section from the mandate letter that",
  "aligns our project goals to those of",
  "the Prime Minister of Canada.",
];

const MANDATE = [
  "Following our government-wide efforts to resettle more than 39,000 Syrian",
  "refugees as of January 2017, continue to welcome refugees from Syria and elsewhere,",
  "and work with provinces and territories, service provider organizations, and communities",
  "to ensure refugees are integrating successfully into Canada to become participating",
  "members of society.",
];

const OUTCOME = [
  "If the citizens are more welcoming and accepting of refugees",
  "resettling in their community, logically, the chances of the refugees",
  "integrating into the communities successfully, increases.",
];

function Lines({ items }) {
  return items.map((line) => (
    <span key={line} className="block whitespace-nowrap">{line} </span>
  ));
}

export default function App() {
  return (
    <div className="relative isolate flex min-h-screen flex-col overflow-hidden bg-[#ebeeed] pr-[104px] pl-[98px] font-[Roboto,sans-serif] text-[#282627]">
      <Backdrop />

      <header className="relative flex justify-between pt-[76px] text-[19px] leading-[22px] text-[#6d6e70]">
        <p>WE ARE ALL HUMAN</p>
        <p>PRIMARY RESEARCH</p>
      </header>

      <main className="relative mt-[243px] grid grow grid-cols-[570px_300px_1fr] items-start">
        <section>
          <h2 className="-ml-[43px] flex h-20 w-[390px] items-center bg-[#282627] pt-1 pl-[43px] text-[40px] leading-none font-bold text-[#cda562]">
            HOW MIGHT WE
          </h2>
          <h1 className="mt-3 text-[68px] leading-[121px] font-extralight">
            <Lines items={QUESTION} />
          </h1>
        </section>

        <p className="ml-[46px] pt-[133px] text-[17px] leading-[36px] italic">
          <Lines items={NOTE} />
        </p>

        <section className="flex w-[1012px] flex-col items-center justify-self-end pt-[21px] text-center">
          <h2 className="flex h-[42px] items-center bg-[#282627] px-[14px] text-[20px] leading-none font-bold text-[#ebeeed]">
            MANDATE LETTER ALIGNMENT
          </h2>
          <span aria-hidden="true" className="mt-[79px] h-[75px] font-[Liberation_Serif,serif] text-[160px] leading-[134px] font-bold text-[#cda562]">“</span>
          <blockquote className="text-[26px] leading-[51px] italic">
            <span className="block pl-[72px] whitespace-nowrap">{MANDATE[0]} </span>
            <Lines items={MANDATE.slice(1)} />
          </blockquote>
          <span aria-hidden="true" className="h-[148px] font-[Liberation_Serif,serif] text-[160px] leading-[138px] font-bold text-[#cda562]">”</span>
          <p className="mt-[271px] text-[34px] leading-[55px] text-[#cda562]">
            <Lines items={OUTCOME} />
          </p>
        </section>
      </main>

      <footer className="relative flex justify-between pb-[53px] text-[19px] leading-[24px] font-bold text-[#ebeeed]">
        <p className="flex flex-col items-start gap-1">
          20
          <span className="h-1 w-3 bg-[#cda562]" />
        </p>
        <p className="flex flex-col items-end gap-1">
          21
          <span className="h-1 w-3 bg-[#cda562]" />
        </p>
      </footer>

      <p aria-hidden="true" className="pointer-events-none absolute top-[-127px] left-[-47px] text-[960px] leading-[952px] font-black whitespace-nowrap text-[#e7e5e6] mix-blend-multiply">
        0<span className="-ml-4 font-[Inter,sans-serif] text-[940px] leading-none font-[750] [font-feature-settings:'ss01']">6</span>
      </p>
      <p aria-hidden="true" className="pointer-events-none absolute top-[404px] left-[1279px] text-[490px] leading-[500px] font-black text-[#f3f2f4] mix-blend-multiply">
        2017
      </p>
    </div>
  );
}
